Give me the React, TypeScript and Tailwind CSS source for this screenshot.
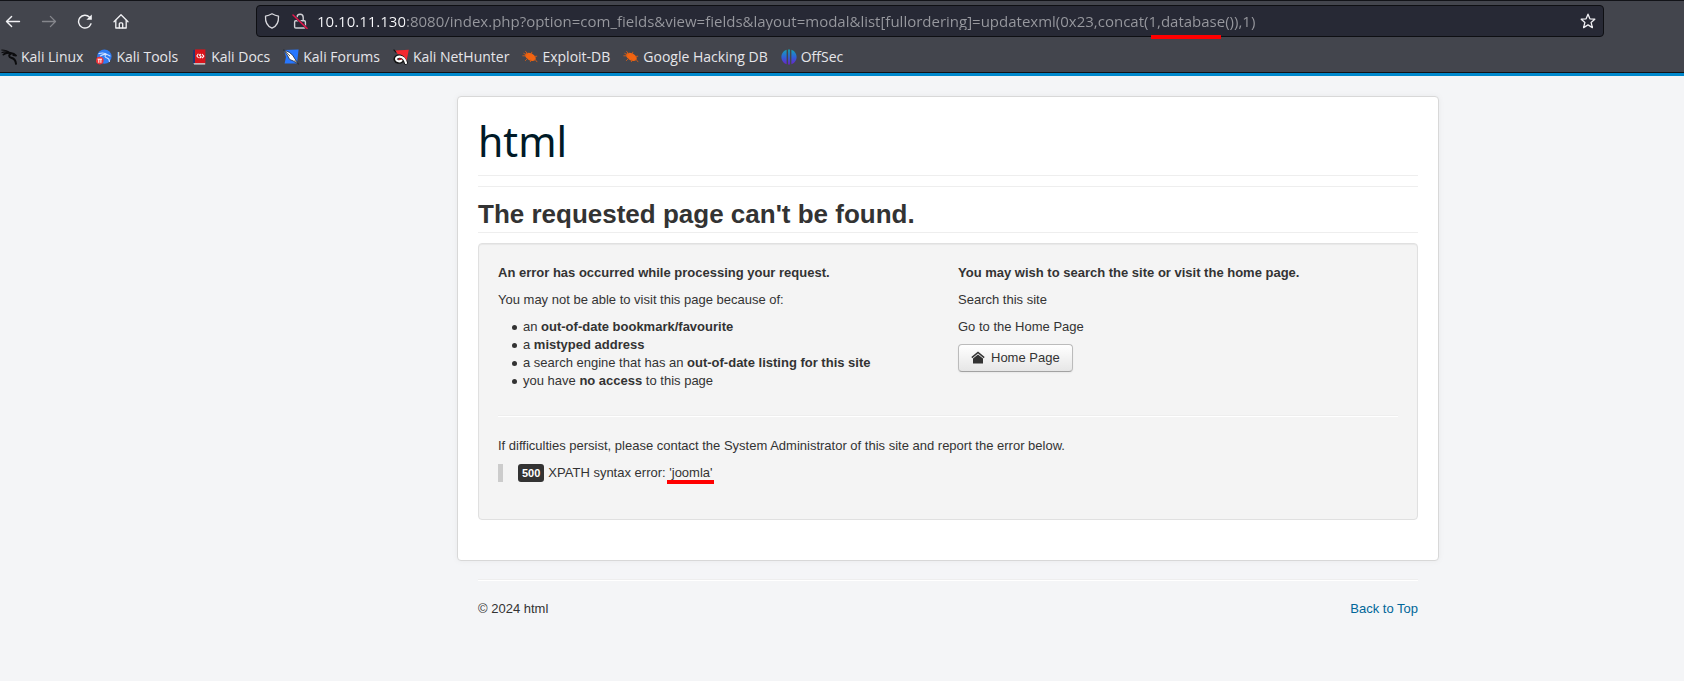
import React from "react";

const HELV = "font-['Liberation_Sans',Arial,sans-serif]";

function BackIcon() {
  return (
    <svg width="16" height="16" viewBox="0 0 16 16" fill="none" stroke="currentColor" strokeWidth="1.4" strokeLinecap="round" strokeLinejoin="round">
      <path d="M14.5 8.5H1.5M6.6 3.4L1.5 8.5L6.6 13.6" />
    </svg>
  );
}

function ForwardIcon() {
  return (
    <svg width="16" height="16" viewBox="0 0 16 16" fill="none" stroke="currentColor" strokeWidth="1.3" strokeLinecap="round" strokeLinejoin="round">
      <path d="M1.5 8.5H14.5M9.4 3.4L14.5 8.5L9.4 13.6" />
    </svg>
  );
}

function ReloadIcon() {
  return (
    <svg width="16" height="16" viewBox="0 0 16 16" fill="none" stroke="currentColor" strokeWidth="1.4" strokeLinecap="round">
      <path d="M14 10.8A6.4 6.4 0 1 1 12.6 4.2" />
      <path d="M14.8 1.6V6.8H9.4Z" fill="currentColor" stroke="none" />
    </svg>
  );
}

function HomeIcon() {
  return (
    <svg width="16" height="16" viewBox="0 0 16 16" fill="none" stroke="currentColor" strokeWidth="1.3" strokeLinecap="round" strokeLinejoin="round">
      <path d="M1 8.8L8 1.8L15 8.8" />
      <path d="M2.8 7.4V15H13.2V7.4" />
      <path d="M6.3 14.8V10.8A1 1 0 0 1 7.3 9.8H8.7A1 1 0 0 1 9.7 10.8V14.8" />
    </svg>
  );
}

function ShieldIcon() {
  return (
    <svg width="16" height="16" viewBox="0 0 16 16" fill="none" stroke="#d9d9de" strokeWidth="1.3" strokeLinejoin="round">
      <path d="M8 .8C6 2 3.6 2.9 1.5 3.2C1.2 8.6 2.8 13 8 15.2C13.2 13 14.8 8.6 14.5 3.2C12.4 2.9 10 2 8 .8Z" />
    </svg>
  );
}

function InsecureIcon() {
  return (
    <svg width="16" height="16" viewBox="0 0 16 16" fill="none">
      <g stroke="#d0d0d5" strokeWidth="1.4" strokeLinejoin="round">
        <rect x="2.6" y="7.8" width="10.8" height="7.2" rx="1.2" />
        <path d="M5 4.4A3.1 3.1 0 0 1 11.2 4.4V7.6" />
      </g>
      <path d="M1.4 2.2L14.6 15" stroke="#272935" strokeWidth="2.4" />
      <path d="M1 2L15 15.4" stroke="#e2164b" strokeWidth="1.5" strokeLinecap="round" />
    </svg>
  );
}

function StarIcon() {
  return (
    <svg width="16" height="16" viewBox="0 0 16 16" fill="none" stroke="#f0f0f4" strokeWidth="1.3" strokeLinejoin="round">
      <path d="M8 1.2L9.9 5.8L14.8 6.2L11.1 9.4L12.4 14.6L8 11.9L3.6 14.6L4.9 9.4L1.2 6.2L6.1 5.8Z" />
    </svg>
  );
}

function KaliLinuxIcon() {
  return (
    <svg width="16" height="16" viewBox="0 0 16 16" fill="none" stroke="#0c0c0e" strokeLinecap="round" strokeLinejoin="round">
      <path d="M.8 1C3.6 1 6.4 1.6 8.6 3.6M1 3.6C3.4 2.6 6 2.8 8 4" strokeWidth="1.1" />
      <path d="M2.4 5.6C4.4 3.8 7 3.4 9.6 4C12 4.2 13.8 5 15 6.6L12.2 6" strokeWidth="1.8" />
      <path d="M9.8 4.6C7.4 6 7.8 8.2 10.2 8.8C12.8 9.4 14.6 10.8 15 14.8" strokeWidth="2" />
    </svg>
  );
}

function KaliToolsIcon() {
  return (
    <svg width="16" height="16" viewBox="0 0 16 16" fill="none">
      <circle cx="8.4" cy="7.6" r="7.2" fill="#2f7bf2" />
      <path d="M3 4.6C6 3.6 9 4 11 5.4L14 7M4.4 7C6.4 5.4 9 5.2 10.4 5.6C8 7 9 8.6 11 9C12.6 9.4 13.4 10.6 13.4 12.4" stroke="#cfe0ff" strokeWidth="1.1" strokeLinecap="round" />
      <circle cx="3.8" cy="11.6" r="3.8" fill="#ee3338" />
      <path d="M1.6 10.2H6M2.8 10.2V13.8M4.9 10.2V13.8" stroke="#fff" strokeWidth="1" />
    </svg>
  );
}

function KaliDocsIcon() {
  return (
    <svg width="16" height="16" viewBox="0 0 16 16" fill="none">
      <path d="M2 1.2L4.4 .4V15.2L2 14.2Z" fill="#23356f" />
      <rect x="4" y=".4" width="10.4" height="13.8" fill="#d8141c" />
      <path d="M2.4 14.2H14.2V15.4H3.2Z" fill="#e9e4e4" />
      <path d="M7.4 4.8L5.8 7L7.6 9M11 5L12.8 7.2L11.2 9.2M10 5.2C8.4 5.2 8 6.4 9.4 7C10.8 7.6 10 8.8 8.4 8.8" stroke="#fff" strokeWidth="1.1" strokeLinejoin="round" />
    </svg>
  );
}

function KaliForumsIcon() {
  return (
    <svg width="16" height="16" viewBox="0 0 16 16" fill="none">
      <path d="M.8 1L15.6 .6L14 14.6H1.6L3 8Z" fill="#2777ff" />
      <path d="M.4 .8L6.4 3.4L9.8 6.4L11.6 9.4L15.6 15.2L10.4 12L6.6 10.4L4.4 6.2Z" fill="#fff" stroke="#15171c" strokeWidth=".7" strokeLinejoin="round" />
      <path d="M1 1L7 7M11.6 11L14.8 14.6" stroke="#333" strokeWidth=".7" />
    </svg>
  );
}

function NetHunterIcon() {
  return (
    <svg width="16" height="16" viewBox="0 0 16 16" fill="none">
      <path d="M.6 .6L3.4 3.6" stroke="#111" strokeWidth="1.2" />
      <path d="M12.8 13.6C12 10 10.4 7.8 7 7.4C3.8 7.2 2 8.8 2.6 10.8C3.4 13 6.8 13.4 8.4 12" stroke="#111" strokeWidth="4" strokeLinecap="round" />
      <path d="M2.4 1.4L15.8 .8L13.6 11.8C12.4 8 9.4 5.2 4.6 5Z" fill="#f4282f" />
      <path d="M13 14C12 10.2 10.4 8 7 7.6C4.4 7.4 2.6 8.8 3.2 10.6C4 12.6 7 12.8 8.4 11.4" stroke="#fff" strokeWidth="2.2" strokeLinecap="round" />
      <path d="M5.6 10.2H8.6" stroke="#d8141c" strokeWidth="1.4" />
    </svg>
  );
}

function BugIcon() {
  return (
    <svg width="16" height="16" viewBox="0 0 16 16" fill="none">
      <ellipse cx="8.4" cy="7.8" rx="5.8" ry="3.5" transform="rotate(28 8.4 7.8)" fill="#f26411" />
      <path d="M5.6 4.8L3.6 2.4M9.4 4.8L9.8 3.2M3.8 6.8L.8 6.8M5.4 9.6L3.4 11.6M8.6 11L8.4 12.6M13 7.4L14.8 7.2M13 10.4L15 12.8M4 5.6L1.8 4.4" stroke="#c75a1c" strokeWidth="1" strokeLinecap="round" />
    </svg>
  );
}

function OffSecIcon() {
  return (
    <svg width="16" height="16" viewBox="0 0 16 16" fill="none">
      <defs>
        <linearGradient id="offsec" x1="0" y1="0" x2="0" y2="1">
          <stop offset="0" stopColor="#12a5b5" />
          <stop offset=".5" stopColor="#2f63d8" />
          <stop offset="1" stopColor="#6a22c8" />
        </linearGradient>
      </defs>
      <path d="M5.6 .8V15.2C2.6 14.4 .4 11.4 .4 8S2.6 1.6 5.6 .8ZM7.1 .4H8.9V15.6H7.1ZM10.4 .8C13.4 1.6 15.6 4.6 15.6 8S13.4 14.4 10.4 15.2Z" fill="url(#offsec)" />
    </svg>
  );
}

function ButtonHomeIcon() {
  return (
    <svg width="14" height="14" viewBox="0 0 14 14" fill="none">
      <path d="M.8 6.6L7 1.5L13.2 6.6" stroke="#333" strokeWidth="1.5" />
      <path d="M7 3.6L12 7.6V12.6H2V7.6Z" fill="#333" />
    </svg>
  );
}

const bookmarks = [
  { label: "Kali Linux", icon: <KaliLinuxIcon /> },
  { label: "Kali Tools", icon: <KaliToolsIcon /> },
  { label: "Kali Docs", icon: <KaliDocsIcon /> },
  { label: "Kali Forums", icon: <KaliForumsIcon /> },
  { label: "Kali NetHunter", icon: <NetHunterIcon /> },
  { label: "Exploit-DB", icon: <BugIcon /> },
  { label: "Google Hacking DB", icon: <BugIcon /> },
  { label: "OffSec", icon: <OffSecIcon /> },
];

const reasons = [
  <>an <strong>out-of-date bookmark/favourite</strong></>,
  <>a <strong>mistyped address</strong></>,
  <>a search engine that has an <strong>out-of-date listing for this site</strong></>,
  <>you have <strong>no access</strong> to this page</>,
];

function BrowserChrome() {
  return (
    <header className="border-y border-[#121318] bg-[#43454d] font-['Open_Sans',sans-serif] text-[#e6e6ea]">
      <div className="flex items-center pt-1 pr-20">
        <nav aria-label="Navigation" className="flex w-64 shrink-0 items-center gap-5 pl-[5px] text-[#f2f2f5]">
          <button type="button" aria-label="Back"><BackIcon /></button>
          <button type="button" aria-label="Forward" disabled className="text-[#85868c]"><ForwardIcon /></button>
          <button type="button" aria-label="Reload"><ReloadIcon /></button>
          <button type="button" aria-label="Home"><HomeIcon /></button>
        </nav>
        <div className="relative flex h-8 min-w-0 grow items-center rounded border border-[#0e0f13] bg-[#272935] px-[7px]">
          <ShieldIcon />
          <span className="ml-3"><InsecureIcon /></span>
          <input
            type="text"
            aria-label="Address"
            defaultValue="10.10.11.130:8080/index.php?option=com_fields&view=fields&layout=modal&list[fullordering]=updatexml(0x23,concat(1,database()),1)"
            className="ml-[9px] min-w-0 grow bg-[linear-gradient(to_right,#fbfbfe_88px,#98999f_88px)] bg-clip-text text-[15px] text-transparent outline-none"
          />
          <button type="button" aria-label="Bookmark this page"><StarIcon /></button>
          <span className="absolute top-[29px] left-[894px] h-1 w-[70px] bg-[#ff0000]" />
        </div>
      </div>
      <nav aria-label="Bookmarks" className="flex h-[35px] items-center gap-[13px] pt-1 pl-px text-[14px]">
        {bookmarks.map((b) => (
          <a key={b.label} href="#" className="flex items-center gap-1 whitespace-nowrap">
            {b.icon}
            {b.label}
          </a>
        ))}
      </nav>
    </header>
  );
}

function ErrorDetails() {
  return (
    <section className="rounded border border-[#e0e0e0] bg-[#f4f4f4] px-[19px] pt-5 pb-[37px] shadow-[inset_0_1px_1px_rgba(0,0,0,0.05)]">
      <div className="grid grid-cols-2 gap-5">
        <div>
          <p className="mb-[9px] font-bold">An error has occurred while processing your request.</p>
          <p className="mb-[9px]">You may not be able to visit this page because of:</p>
          <ul className="ml-[25px]">
            {reasons.map((reason, i) => (
              <li
                key={i}
                className="before:mr-1.5 before:-ml-[11px] before:inline-block before:size-[5px] before:rounded-full before:bg-[#333333] before:align-middle before:content-['']"
              >
                {reason}
              </li>
            ))}
          </ul>
        </div>
        <div>
          <p className="mb-[9px] font-bold">You may wish to search the site or visit the home page.</p>
          <p className="mb-[9px]">Search this site</p>
          <p className="mb-2">Go to the Home Page</p>
          <a
            href="#"
            className="inline-flex h-7 items-center gap-1.5 rounded border border-[#bbbbbb] border-b-[#a2a2a2] bg-linear-to-b from-white to-[#e6e6e6] px-3 shadow-[0_1px_2px_rgba(0,0,0,0.05)]"
          >
            <ButtonHomeIcon />
            Home Page
          </a>
        </div>
      </div>
      <hr className="mt-[25px] mb-5 border-t border-b border-t-[#eeeeee] border-b-white" />
      <p className="mb-[9px]">If difficulties persist, please contact the System Administrator of this site and report the error below.</p>
      <blockquote className="flex items-center gap-1 border-l-[5px] border-[#cccccc] pl-[15px]">
        <span className="rounded-[3px] bg-[#333333] px-1 text-[11px] font-bold text-white">500</span>
        <span>
          XPATH syntax error:{" "}
          <span className="relative">
            'joomla'
            <span className="absolute top-[15px] -left-0.5 h-1 w-[47px] bg-[#ff0000]" />
          </span>
        </span>
      </blockquote>
    </section>
  );
}

export default function App() {
  return (
    <div className={`min-h-screen bg-[#f4f5f7] text-[13px] leading-[18px] text-[#333333] ${HELV}`}>
      <BrowserChrome />
      <main className="border-t-[3px] border-[#0088cc] pt-5 pr-[245px] pl-[457px]">
        <div className="rounded border border-[#d8d8d8] bg-white px-5 pt-5 pb-10 shadow-[0_0_6px_rgba(0,0,0,0.05)]">
          <a href="#" className="block border-b border-[#eeeeee] pt-[3px] pb-3 font-['Noto_Sans','Open_Sans',sans-serif] text-[41px] leading-[43px] text-[#001a27]">
            html
          </a>
          <h1 className="mt-2.5 mb-2.5 border-y border-[#eeeeee] pt-[11px] pb-px text-[26px] leading-[33px] font-bold">
            The requested page can't be found.
          </h1>
          <ErrorDetails />
        </div>
        <footer className="px-[21px] pt-[18px]">
          <hr className="mb-[19px] border-t border-b border-t-[#eeeeee] border-b-white" />
          <div className="flex justify-between">
            <p>© 2024 html</p>
            <a href="#" className="text-[#006699]">Back to Top</a>
          </div>
        </footer>
      </main>
    </div>
  );
}
